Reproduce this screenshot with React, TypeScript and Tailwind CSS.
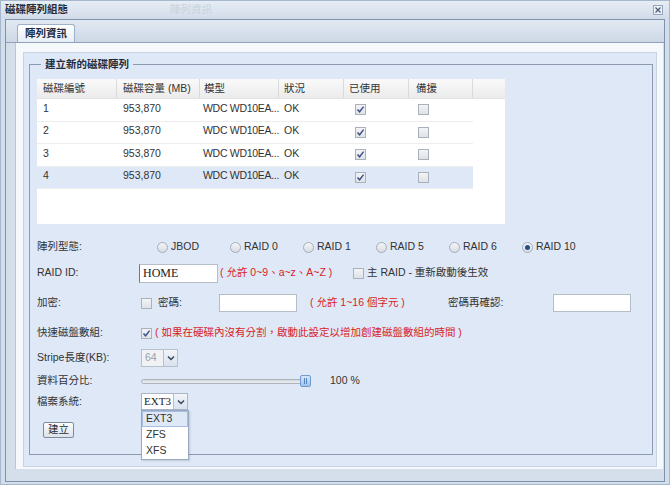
import React from "react";

const FONT = { fontFamily: '"Liberation Sans", "Noto Sans CJK TC", sans-serif' };

type Disk = { id: string; size: string; model: string; status: string };

const disks: Disk[] = [
  { id: "1", size: "953,870", model: "WDC WD10EA...", status: "OK" },
  { id: "2", size: "953,870", model: "WDC WD10EA...", status: "OK" },
  { id: "3", size: "953,870", model: "WDC WD10EA...", status: "OK" },
  { id: "4", size: "953,870", model: "WDC WD10EA...", status: "OK" },
];

const raidTypes = ["JBOD", "RAID 0", "RAID 1", "RAID 5", "RAID 6", "RAID 10"];

function Check({ checked }: { checked?: boolean }) {
  return (
    <span className="inline-flex w-[11px] h-[11px] shrink-0 items-center justify-center border border-[#a9b1bd] bg-gradient-to-b from-[#f3f4f6] to-[#dfe2e6]">
      {checked && (
        <svg width="9" height="9" viewBox="0 0 9 9">
          <path d="M1.5 4.5 L3.6 6.8 L7.6 1.6" fill="none" stroke="#3b4f86" strokeWidth="1.4" />
        </svg>
      )}
    </span>
  );
}

function Radio({ checked }: { checked?: boolean }) {
  return (
    <span className="inline-flex w-[11px] h-[11px] shrink-0 items-center justify-center rounded-full border border-[#a4adb9] bg-gradient-to-b from-[#f4f5f7] to-[#d9dde2]">
      {checked && <span className="w-[5px] h-[5px] rounded-full bg-[#234f86]" />}
    </span>
  );
}

function ComboArrow() {
  return (
    <span className="flex w-[14px] h-full shrink-0 items-center justify-center border-l border-[#b6bfcc] bg-gradient-to-b from-[#f2f5fa] to-[#d9e2ee]">
      <svg width="8" height="6" viewBox="0 0 8 6">
        <path d="M1 1.5 L4 4.5 L7 1.5" fill="none" stroke="#33475f" strokeWidth="1.5" />
      </svg>
    </span>
  );
}

export default function App() {
  return (
    <div
      style={FONT}
      className="w-[670px] h-[485px] bg-[#d3deeb] border border-[#a8b8cc] flex flex-col text-[10.5px] text-[#333]"
    >
      {/* title bar */}
      <div className="h-[18px] shrink-0 flex items-center justify-between pl-[4px] pr-[6px] bg-gradient-to-b from-[#e6edf5] to-[#d2dce9]">
        <div className="flex items-center">
          <span className="font-bold text-[#1f2d40]">磁碟陣列組態</span>
          <span className="ml-[102px] text-[#c9d3df]">陣列資訊</span>
        </div>
        <span className="flex w-[10px] h-[10px] items-center justify-center border border-[#97a7bb] bg-[#eef2f7]">
          <svg width="8" height="8" viewBox="0 0 8 8">
            <path d="M1.5 1.5 L6.5 6.5 M6.5 1.5 L1.5 6.5" stroke="#4a5c74" strokeWidth="1.3" />
          </svg>
        </span>
      </div>

      {/* body frame */}
      <div className="mx-[4px] mb-[4px] flex-1 flex flex-col border border-[#7f92ab] bg-[#d5dfec]">
        {/* tab strip */}
        <div className="h-[23px] shrink-0 flex items-end pl-[11px] border-b border-[#8fa2ba] bg-gradient-to-b from-[#e2e9f2] to-[#ccd8e7]">
          <div className="h-[18px] px-[7px] flex items-center rounded-t-[3px] border border-b-0 border-[#9fb1c7] bg-gradient-to-b from-[#ffffff] to-[#e6edf6] font-bold text-[#1f2d40]">
            陣列資訊
          </div>
        </div>

        {/* tab body */}
        <div className="flex-1 flex flex-col pl-[9px] pr-[1px] pb-[12px]">
          <div className="flex-1 flex flex-col bg-[#f6f9fc] pl-[7px] pt-[9px] pr-[6px] pb-[2px] border-l border-[#b8c6d8]">
            <div className="flex-1 flex flex-col bg-[#dfe8f6] border border-[#c5d3e5] pl-[5px] pr-[3px] pt-[4px] pb-[11px]">
              <fieldset className="border border-[#8d9bb1] pl-[7px] pr-[4px] pb-[16px] pt-[8px]">
                <legend className="ml-[4px] px-[4px] leading-[14px] font-bold text-[#1f2d40]">
                  建立新的磁碟陣列
                </legend>

                {/* grid */}
                <div className="w-[468px] h-[145px] bg-white flex flex-col">
                  <div className="h-[20px] shrink-0 flex bg-gradient-to-b from-[#fafafa] to-[#ebebeb] border-b border-[#e3e3e3]">
                    <div className="w-[80px] pl-[6px] flex items-center border-r border-[#dadada]">磁碟編號</div>
                    <div className="w-[83px] pl-[6px] flex items-center border-r border-[#dadada]">磁碟容量 (MB)</div>
                    <div className="w-[79px] pl-[4px] flex items-center border-r border-[#dadada]">模型</div>
                    <div className="w-[65px] pl-[5px] flex items-center border-r border-[#dadada]">狀況</div>
                    <div className="w-[65px] pl-[5px] flex items-center border-r border-[#dadada]">已使用</div>
                    <div className="w-[64px] pl-[7px] flex items-center border-r border-[#dadada]">備援</div>
                    <div className="flex-1" />
                  </div>
                  {disks.map((d, i) => (
                    <div
                      key={d.id}
                      className={`w-[436px] h-[22.5px] shrink-0 flex items-center border-b border-[#ededed] ${
                        i === 3 ? "bg-[#dfe8f6]" : "bg-white"
                      }`}
                    >
                      <div className="w-[80px] pl-[6px] -mt-[2px]">{d.id}</div>
                      <div className="w-[83px] pl-[6px] -mt-[2px]">{d.size}</div>
                      <div className="w-[79px] pl-[3px] -mt-[2px] whitespace-nowrap tracking-[-0.3px]">{d.model}</div>
                      <div className="w-[65px] pl-[5px] -mt-[2px]">{d.status}</div>
                      <div className="w-[65px] pl-[11px] flex">
                        <Check checked />
                      </div>
                      <div className="w-[64px] pl-[9px] flex">
                        <Check />
                      </div>
                    </div>
                  ))}
                </div>

                {/* raid type */}
                <div className="mt-[13px] h-[20px] flex items-center">
                  <span className="w-[104px]">陣列型態:</span>
                  <div className="ml-[16px] flex">
                    {raidTypes.map((r) => (
                      <label key={r} className="w-[73px] flex items-center gap-[3px]">
                        <Radio checked={r === "RAID 10"} />
                        <span>{r}</span>
                      </label>
                    ))}
                  </div>
                </div>

                {/* raid id */}
                <div className="mt-[6px] h-[20px] flex items-center">
                  <span className="w-[102px]">RAID ID:</span>
                  <div
                    className="w-[79px] h-[19px] flex items-center pl-[3px] bg-white border border-[#b5bdc9] border-l-[#6f7886] text-[12px] text-[#222]"
                    style={{ fontFamily: '"Liberation Serif", serif' }}
                  >
                    HOME
                  </div>
                  <span className="ml-[2px] w-[133px] text-[#d81e1e]">( 允許 0~9、a~z、A~Z )</span>
                  <Check />
                  <span className="ml-[3px]">主 RAID - 重新啟動後生效</span>
                </div>

                {/* encryption */}
                <div className="mt-[10px] h-[20px] flex items-center">
                  <span className="w-[104px]">加密:</span>
                  <span className="w-[17px] flex">
                    <Check />
                  </span>
                  <span className="w-[61px]">密碼:</span>
                  <span className="w-[78px] h-[18px] bg-white border border-[#b5bdc9]" />
                  <span className="ml-[13px] w-[138px] text-[#d81e1e]">( 允許 1~16 個字元 )</span>
                  <span className="w-[105px]">密碼再確認:</span>
                  <span className="w-[78px] h-[18px] bg-white border border-[#b5bdc9]" />
                </div>

                {/* quick */}
                <div className="mt-[10px] h-[20px] flex items-center">
                  <span className="w-[104px]">快速磁盤數組:</span>
                  <span className="w-[14px] flex">
                    <Check checked />
                  </span>
                  <span className="text-[#d81e1e]">( 如果在硬碟內沒有分割，啟動此設定以增加創建磁盤數組的時間 )</span>
                </div>

                {/* stripe */}
                <div className="mt-[5px] h-[19px] flex items-center">
                  <span className="w-[104px]">Stripe長度(KB):</span>
                  <div className="w-[37px] h-[18px] flex border border-[#b8c0cc] bg-[#f0f2f5]">
                    <span className="flex-1 pl-[3px] flex items-center text-[#9aa0a8]">64</span>
                    <ComboArrow />
                  </div>
                </div>

                {/* percent */}
                <div className="mt-[5px] h-[18px] flex items-center">
                  <span className="w-[104px]">資料百分比:</span>
                  <div className="w-[172px] flex items-center">
                    <div className="w-[162px] h-[5px] rounded-full border border-[#aab2bc] bg-gradient-to-b from-[#d3d7dc] to-[#eef0f2]" />
                    <div className="-ml-[3px] w-[11px] h-[12px] rounded-[2px] border border-[#6f9bd0] bg-gradient-to-b from-[#d6e6fa] to-[#9fc2ec] flex items-center justify-center gap-[1px]">
                      <span className="w-px h-[6px] bg-[#5a86bd]" />
                      <span className="w-px h-[6px] bg-[#5a86bd]" />
                    </div>
                  </div>
                  <span className="ml-[17px]">100 %</span>
                </div>

                {/* filesystem */}
                <div className="mt-[3px] h-[17px] flex items-center">
                  <span className="w-[104px]">檔案系統:</span>
                  <div className="relative w-[47px] h-[17px] flex border border-[#a9b6c8] bg-white">
                    <span
                      className="flex-1 pl-[2px] flex items-center text-[11px] text-[#222]"
                      style={{ fontFamily: '"Liberation Serif", serif' }}
                    >
                      EXT3
                    </span>
                    <ComboArrow />
                    <div className="absolute left-[-1px] top-[16px] w-[48px] bg-white border border-[#99a9c0] z-10 flex flex-col shadow-[1px_1px_2px_rgba(0,0,0,0.15)]">
                      <span className="h-[16px] pl-[3px] flex items-center bg-[#dfe8f6] border border-[#a8bde6]">EXT3</span>
                      <span className="h-[16px] pl-[4px] flex items-center">ZFS</span>
                      <span className="h-[16px] pl-[4px] flex items-center">XFS</span>
                    </div>
                  </div>
                </div>

                {/* submit */}
                <div className="mt-[12px] pl-[6px] flex">
                  <button
                    type="button"
                    className="h-[16px] px-[4px] flex items-center rounded-[2px] border border-[#7f8b9c] bg-gradient-to-b from-[#fbfcfd] to-[#dde3ea] text-[#1f2d40]"
                  >
                    建立
                  </button>
                </div>
              </fieldset>
            </div>
          </div>
        </div>
      </div>
    </div>
  );
}
